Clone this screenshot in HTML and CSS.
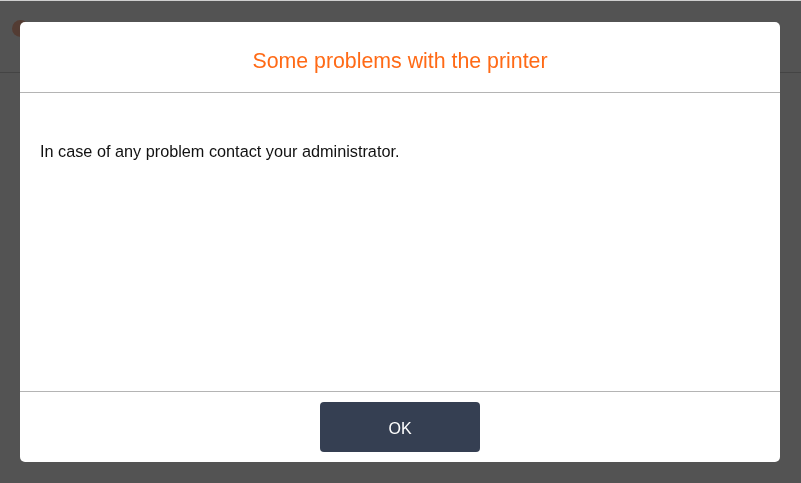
FILE: index.html
```html
<!DOCTYPE html>
<html lang="en">
<head>
<meta charset="utf-8">
<title>Printer problem</title>
<link rel="stylesheet" href="styles.css">
</head>
<body>
<div class="page">
  <header class="page-header">
    <span class="logo-dot"></span>
  </header>
</div>
<div class="overlay">
  <div class="modal" role="dialog" aria-labelledby="modal-title">
    <div class="modal-header">
      <h2 id="modal-title" class="modal-title">Some problems with the printer</h2>
    </div>
    <div class="modal-body">
      <p class="modal-text">In case of any problem contact your administrator.</p>
    </div>
    <div class="modal-footer">
      <button class="btn-ok" type="button">OK</button>
    </div>
  </div>
</div>
</body>
</html>
```

FILE: styles.css
```css
html, body {
  margin: 0;
  padding: 0;
  height: 100%;
}

body {
  font-family: "Liberation Sans", Arial, sans-serif;
  background: #ffffff;
  border-top: 1px solid #cfcfcf;
  box-sizing: border-box;
  overflow: hidden;
}

.page {
  height: 100%;
}

.page-header {
  height: 71px;
  border-bottom: 1px solid #d2d2d2;
  display: flex;
  align-items: center;
  padding-left: 12px;
}

.logo-dot {
  width: 17px;
  height: 17px;
  border-radius: 50%;
  background: #ffb89c;
  margin-top: -16px;
}

.overlay {
  position: fixed;
  top: 1px;
  left: 0;
  right: 0;
  bottom: 0;
  background: rgba(0, 0, 0, 0.675);
  display: flex;
  padding: 21px 21px 21px 20px;
}

.modal {
  flex: 1;
  background: #ffffff;
  border-radius: 5px;
  display: flex;
  flex-direction: column;
  overflow: hidden;
}

.modal-header {
  height: 71px;
  box-sizing: border-box;
  padding-top: 27px;
  border-bottom: 1px solid #b4b4b4;
  text-align: center;
}

.modal-title {
  margin: 0;
  font-size: 21.33px;
  font-weight: normal;
  color: #ff6a16;
  line-height: normal;
}

.modal-body {
  flex: 1;
  padding: 49px 20px 0 20px;
  border-bottom: 1px solid #b4b4b4;
}

.modal-text {
  margin: 0;
  font-size: 16.25px;
  color: #111111;
  line-height: normal;
}

.modal-footer {
  height: 70px;
  display: flex;
  align-items: center;
  justify-content: center;
}

.btn-ok {
  width: 160px;
  height: 50px;
  border: none;
  border-radius: 4px;
  background: #353f52;
  color: #ffffff;
  font-family: "Liberation Sans", Arial, sans-serif;
  font-size: 16px;
  padding: 3px 0 0 0;
  cursor: pointer;
}
```
